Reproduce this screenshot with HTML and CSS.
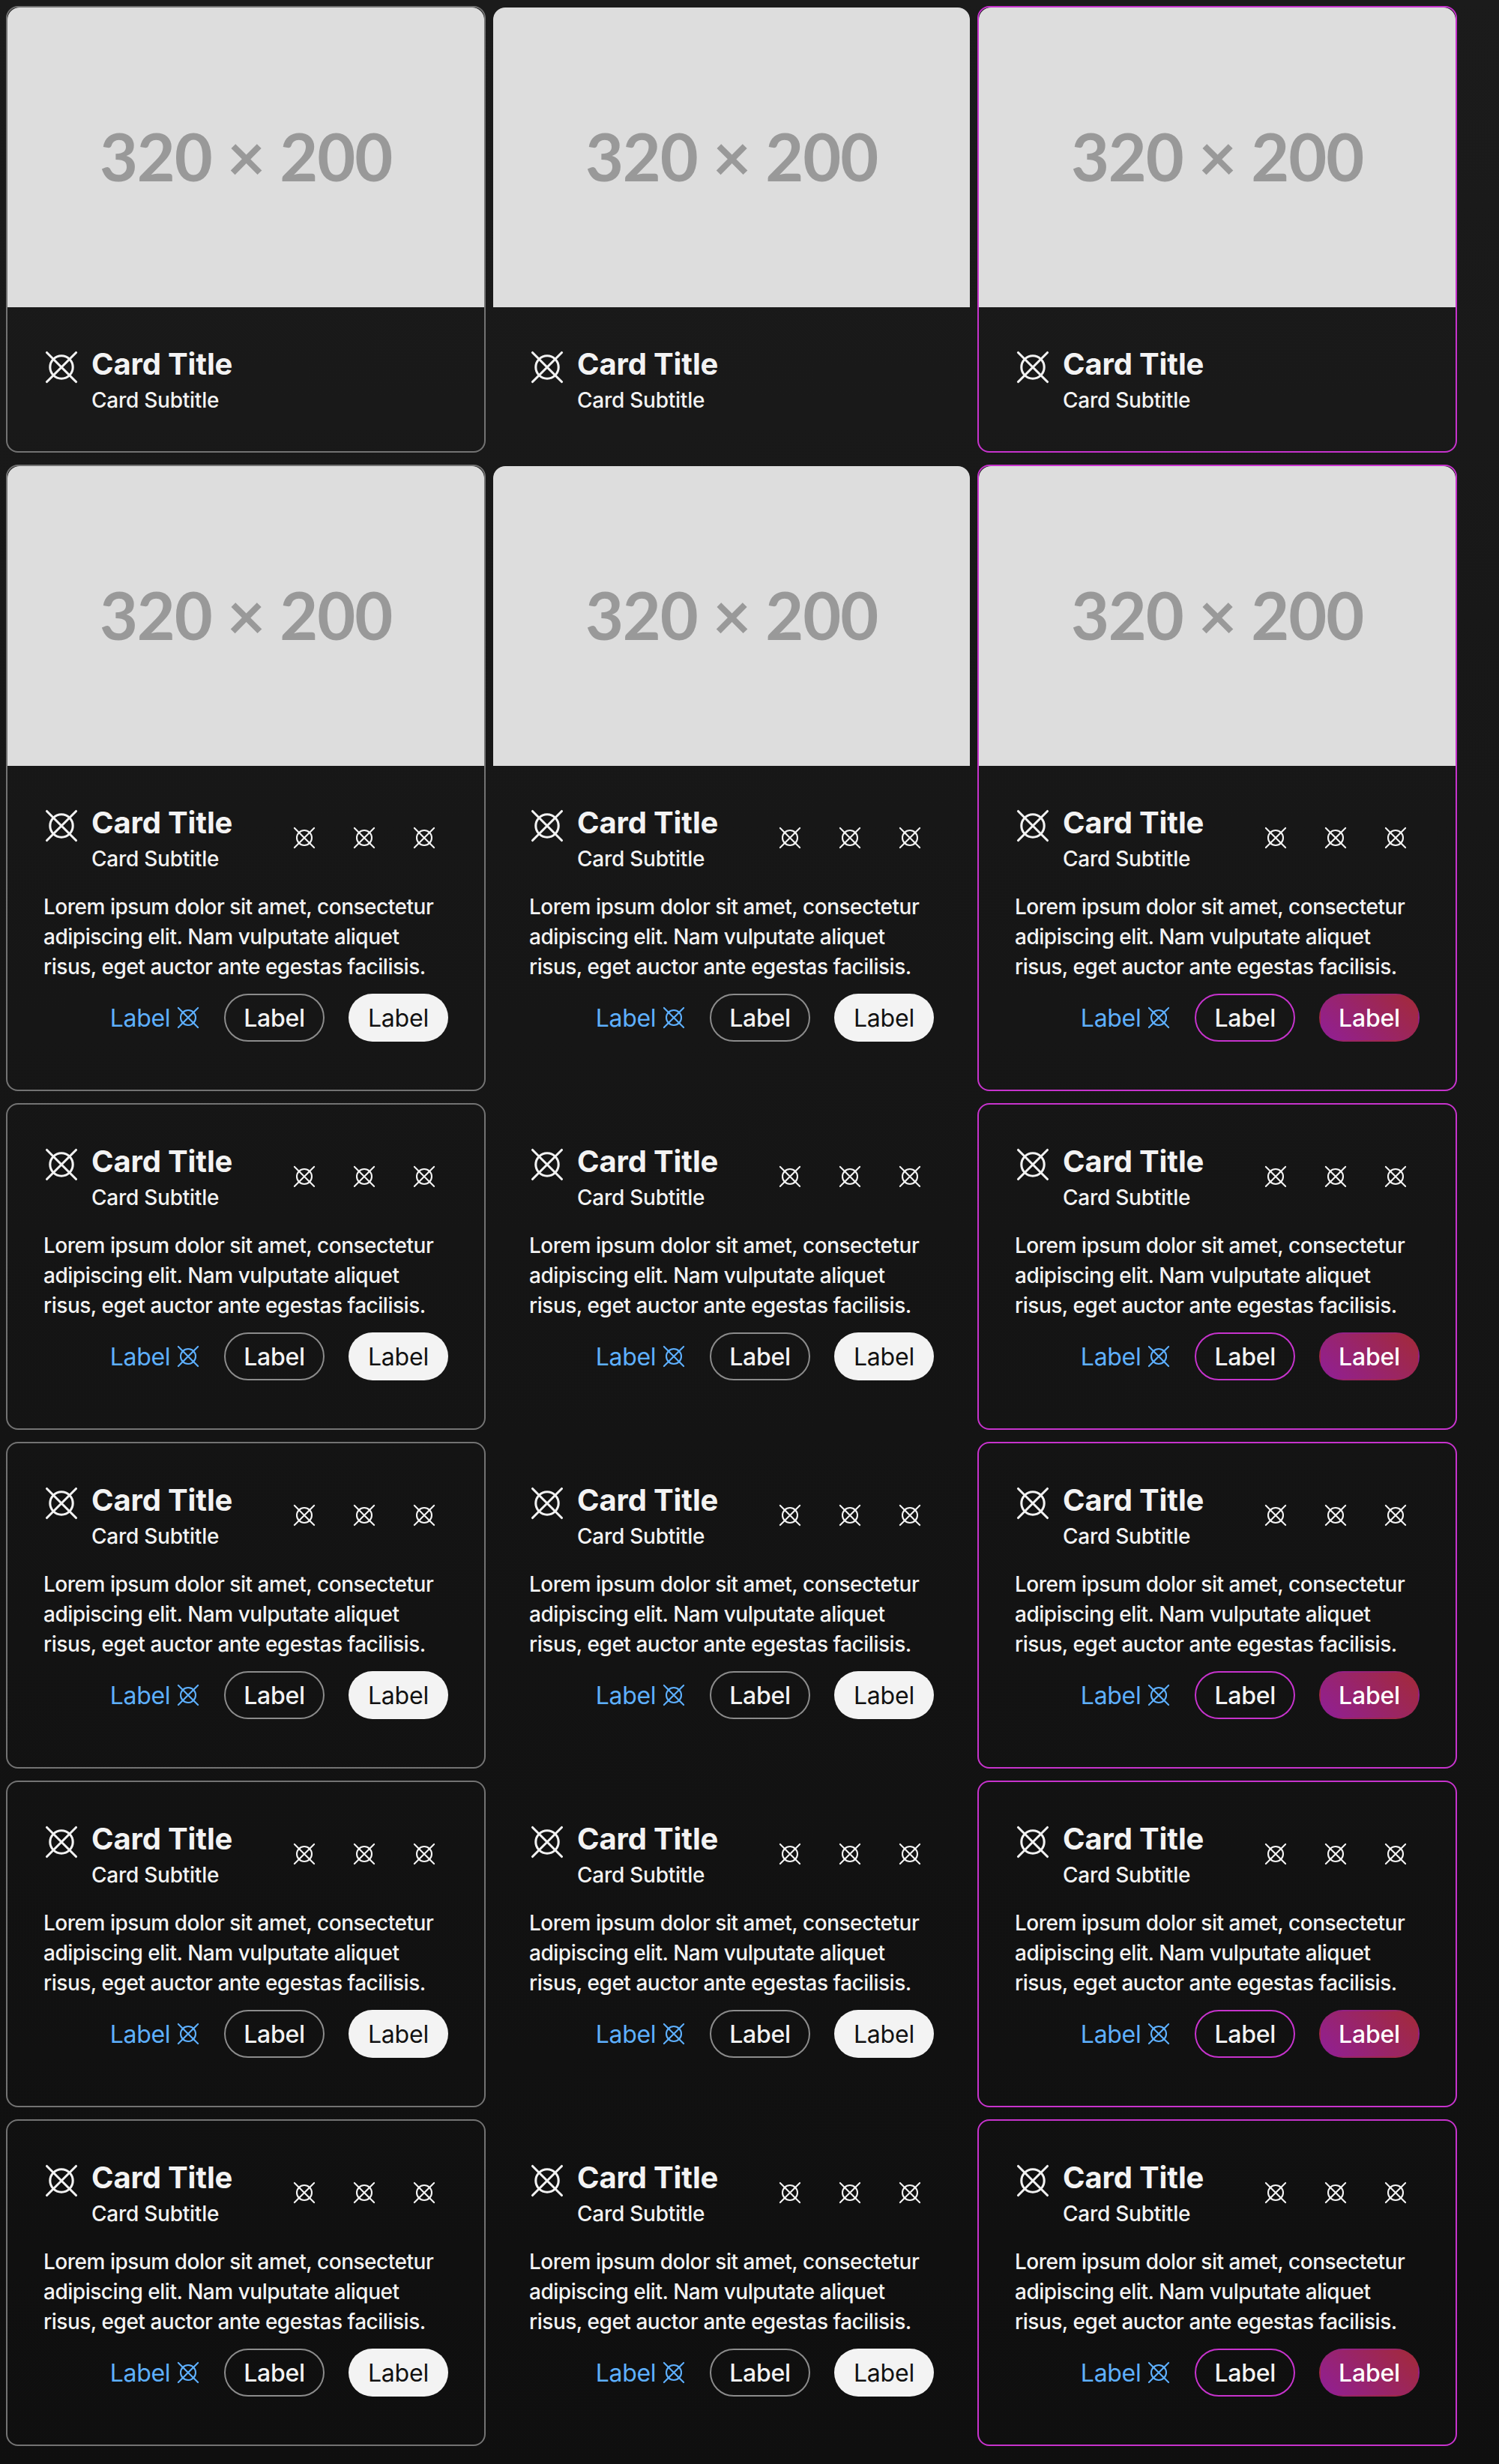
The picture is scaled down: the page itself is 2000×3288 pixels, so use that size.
FILE: index.html
```
<!DOCTYPE html>
<html lang="en">
<head>
<meta charset="utf-8">
<title>Cards</title>
<link rel="stylesheet" href="styles.css">
</head>
<body>
<svg class="sprite" aria-hidden="true">
<symbol id="icon-lg" viewBox="0 0 48 48"><path d="M4.5 4.5 43.5 43.5M43.5 4.5 4.5 43.5"/><circle cx="24" cy="24" r="15.2"/></symbol>
<symbol id="icon-sm" viewBox="0 0 32 32"><path d="M2.9 2.9 29.1 29.1M29.1 2.9 2.9 29.1"/><circle cx="16" cy="16" r="10"/></symbol>
</svg>
<main class="grid" id="grid"></main>
<template id="card-template">
<article class="card">
<div class="media">320 × 200</div>
<div class="body">
<header class="header">
<svg class="icon-lg"><use href="#icon-lg"/></svg>
<div class="titles"><h2 class="title">Card Title</h2><p class="subtitle">Card Subtitle</p></div>
<div class="tools">
<button class="tool"><svg class="icon-sm"><use href="#icon-sm"/></svg></button>
<button class="tool"><svg class="icon-sm"><use href="#icon-sm"/></svg></button>
<button class="tool"><svg class="icon-sm"><use href="#icon-sm"/></svg></button>
</div>
</header>
<p class="text">Lorem ipsum dolor sit amet, consectetur adipiscing elit. Nam vulputate aliquet risus, eget auctor ante egestas facilisis.</p>
<footer class="actions">
<a class="link"><span>Label</span><svg class="icon-sm"><use href="#icon-sm"/></svg></a>
<button class="btn btn-outline">Label</button>
<button class="btn btn-solid">Label</button>
</footer>
</div>
</article>
</template>
<script src="cards.js"></script>
</body>
</html>
```
FILE: styles.css
```
* { box-sizing: border-box; margin: 0; padding: 0; }
body {
  min-height: 3288px;
  padding: 8px;
  background: linear-gradient(#1b1b1b, #0f0f0f);
  color: #f3f3f3;
  font-family: Inter, "Liberation Sans", sans-serif;
}
.sprite { position: absolute; width: 0; height: 0; }
.grid { display: grid; grid-template-columns: repeat(3, 640px); column-gap: 8px; row-gap: 16px; }
.card { border: 2px solid #737373; border-radius: 16px; overflow: hidden; }
.card.plain { border-color: transparent; }
.card.accent { border-color: #c733cd; }
.media {
  display: flex; align-items: center; justify-content: center;
  height: 400px; padding-bottom: 4px; border-radius: 16px 16px 0 0;
  background: #ddd; color: #999;
  font: 700 88px/1 Lato, sans-serif; letter-spacing: -1.1px;
}
.body { padding: 48px 48px 64px; }
.header { display: flex; height: 96px; }
.icon-lg, .icon-sm { flex: none; fill: none; stroke: currentColor; stroke-linecap: round; }
.icon-lg { width: 48px; height: 48px; margin-top: 8px; stroke-width: 3.1px; }
.icon-sm { width: 32px; height: 32px; stroke-width: 2.1px; }
.titles { flex: 1; margin-left: 16px; }
.title { font-size: 40px; line-height: 56px; font-weight: 700; letter-spacing: -0.15px; }
.subtitle { font-size: 28px; line-height: 40px; font-weight: 450; letter-spacing: -0.25px; }
.tools { display: flex; gap: 16px; align-items: center; }
.tool {
  display: flex; align-items: center; justify-content: center;
  width: 64px; height: 64px; border: 0; background: none; color: inherit;
}
.text { margin-top: 24px; font-size: 28px; line-height: 40px; font-weight: 450; letter-spacing: -0.48px; }
.actions { display: flex; justify-content: flex-end; gap: 32px; margin-top: 16px; height: 64px; }
.link { display: flex; align-items: center; gap: 8px; color: #5eb0ff; font-size: 32px; letter-spacing: -0.3px; }
.btn {
  padding: 1px 24px 0; border: 2px solid #8c8c8c; border-radius: 32px;
  background: none; color: inherit; font: 450 32px/60px Inter, "Liberation Sans", sans-serif; letter-spacing: -0.25px;
}
.btn-solid { border-color: transparent; background: #f3f3f3 border-box; color: #111; font-weight: 400; letter-spacing: -0.2px; }
.accent .btn-outline { border-color: #c733cd; }
.accent .btn-solid { background: linear-gradient(45deg, #901f96, #a32a38); color: #fff; font-weight: 450; }
.compact .body { padding-bottom: 48px; }
```
FILE: cards.js
```
const grid = document.getElementById("grid");
const template = document.getElementById("card-template");
const rows = ["compact", "full", "basic", "basic", "basic", "basic"];
const variants = ["outlined", "plain", "accent"];

for (const row of rows) {
  for (const variant of variants) {
    const card = template.content.firstElementChild.cloneNode(true);
    card.classList.add(row, variant);
    if (row === "basic") card.querySelector(".media").remove();
    if (row === "compact") {
      for (const part of [".tools", ".text", ".actions"]) card.querySelector(part).remove();
    }
    grid.append(card);
  }
}
```
